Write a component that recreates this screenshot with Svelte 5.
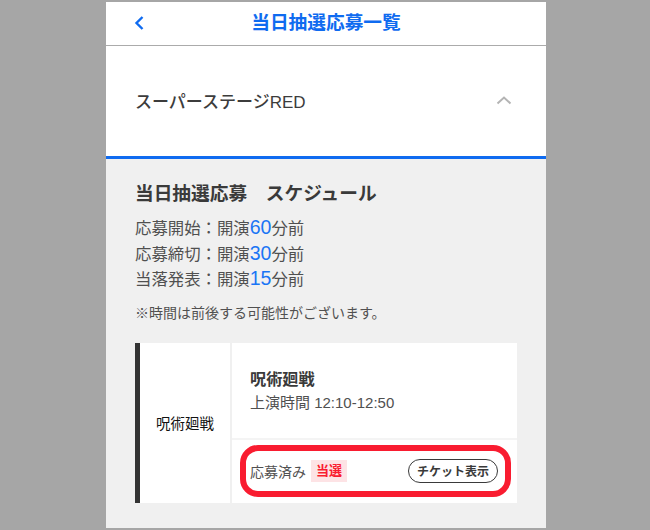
<script>
  const rows = [
    { label: '応募開始', mins: 60 },
    { label: '応募締切', mins: 30 },
    { label: '当落発表', mins: 15 }
  ];
</script>

<div class="page">
  <main class="phone">
    <header class="bar">
      <svg class="back" width="12" height="16" viewBox="0 0 12 16" aria-hidden="true">
        <path d="M9.5 2 L3.5 8 L9.5 14" fill="none" stroke="#0f6bf0" stroke-width="2.4" />
      </svg>
      <h1>当日抽選応募一覧</h1>
    </header>

    <section class="stage">
      <span>スーパーステージRED</span>
      <svg width="16" height="10" viewBox="0 0 16 10" aria-hidden="true">
        <path d="M1.5 8.5 L8 2.5 L14.5 8.5" fill="none" stroke="#b4b4b4" stroke-width="2" />
      </svg>
    </section>

    <section class="info">
      <h2>当日抽選応募　スケジュール</h2>
      <ul>
        {#each rows as r}
          <li>{r.label}：開演<em>{r.mins}</em>分前</li>
        {/each}
      </ul>
      <p class="note">※時間は前後する可能性がございます。</p>

      <article class="card">
        <div class="logo">呪術廻戦</div>
        <div class="body">
          <div class="title">
            <h3>呪術廻戦</h3>
            <p>上演時間 12:10-12:50</p>
          </div>
          <div class="status">
            <div class="ring">
              <span class="applied">応募済み</span>
              <span class="won">当選</span>
              <span class="ticket">チケット表示</span>
            </div>
          </div>
        </div>
      </article>
    </section>
  </main>
</div>

<style>
  :global(body) {
    margin: 0;
    background: #a6a6a6;
  }
  .page {
    height: 530px;
    padding: 2px 0;
    box-sizing: border-box;
    display: flex;
    justify-content: center;
    overflow: hidden;
    font-family: "Liberation Sans", "Noto Sans CJK JP", sans-serif;
    color: #3a3a3a;
  }
  .phone {
    width: 440px;
    height: 526px;
    margin-left: 2px;
    display: flex;
    flex-direction: column;
    background: #f0f0f0;
  }
  .bar {
    height: 43px;
    flex: none;
    position: relative;
    display: flex;
    align-items: center;
    justify-content: center;
    background: #fff;
    border-bottom: 1px solid #ababab;
  }
  .back {
    position: absolute;
    left: 27px;
    top: 13px;
  }
  h1 {
    margin: 0;
    font-size: 18.7px;
    font-weight: 700;
    line-height: 1;
    color: #0f6bf0;
  }
  .stage {
    height: 110px;
    flex: none;
    box-sizing: border-box;
    display: flex;
    align-items: center;
    justify-content: space-between;
    padding: 0 34px 2px 29px;
    background: #fff;
    font-size: 17px;
    font-weight: 500;
    color: #3c3c3c;
  }
  .info {
    flex: 1;
    padding: 24px 29px 0;
    border-top: 3px solid #0f6bf0;
  }
  h2 {
    margin: 0;
    font-size: 18.7px;
    line-height: 22px;
    font-weight: 700;
    color: #3a3a3a;
  }
  ul {
    list-style: none;
    margin: 11px 0 0;
    padding: 0;
    font-size: 16.4px;
    line-height: 25.6px;
    color: #505050;
  }
  li {
    height: 25.6px;
  }
  em {
    font-style: normal;
    font-size: 19.5px;
    line-height: 1;
    color: #1a75f5;
  }
  .note {
    margin: 10px 0 0;
    font-size: 14px;
    line-height: 20px;
    color: #505050;
  }
  .card {
    margin-top: 20px;
    height: 160px;
    display: flex;
    background: #fff;
    border-left: 5px solid #333;
  }
  .logo {
    width: 92px;
    flex: none;
    box-sizing: border-box;
    display: flex;
    align-items: center;
    justify-content: center;
    border-right: 2px solid #f0f0f0;
    font-size: 14.5px;
    font-weight: 400;
    color: #111;
  }
  .body {
    flex: 1;
    display: flex;
    flex-direction: column;
  }
  .title {
    height: 97px;
    flex: none;
    box-sizing: border-box;
    padding: 25px 0 0 18px;
    border-bottom: 2px solid #f4f4f4;
  }
  h3 {
    margin: 0;
    font-size: 16.2px;
    line-height: 22px;
    font-weight: 700;
    color: #3a3a3a;
  }
  .title p {
    margin: 3px 0 0;
    font-size: 15px;
    line-height: 20px;
    color: #505050;
  }
  .status {
    flex: 1;
    padding: 5px 6px 4px 8px;
    display: flex;
  }
  .ring {
    flex: 1;
    height: 52px;
    box-sizing: border-box;
    display: flex;
    align-items: center;
    padding: 0 7px 0 4px;
    border: 6px solid #f91c30;
    border-radius: 18px;
  }
  .applied {
    font-size: 14px;
    color: #505050;
  }
  .won {
    margin-left: 5px;
    padding: 0 5px;
    height: 22px;
    line-height: 22px;
    font-size: 13px;
    font-weight: 700;
    color: #f91c30;
    background: #fde3e5;
  }
  .ticket {
    margin-left: auto;
    height: 24px;
    box-sizing: border-box;
    padding: 0 8px;
    display: flex;
    align-items: center;
    border: 1px solid #3a3a3a;
    border-radius: 12px;
    font-size: 12px;
    font-weight: 700;
    color: #3a3a3a;
    white-space: nowrap;
  }
</style>
